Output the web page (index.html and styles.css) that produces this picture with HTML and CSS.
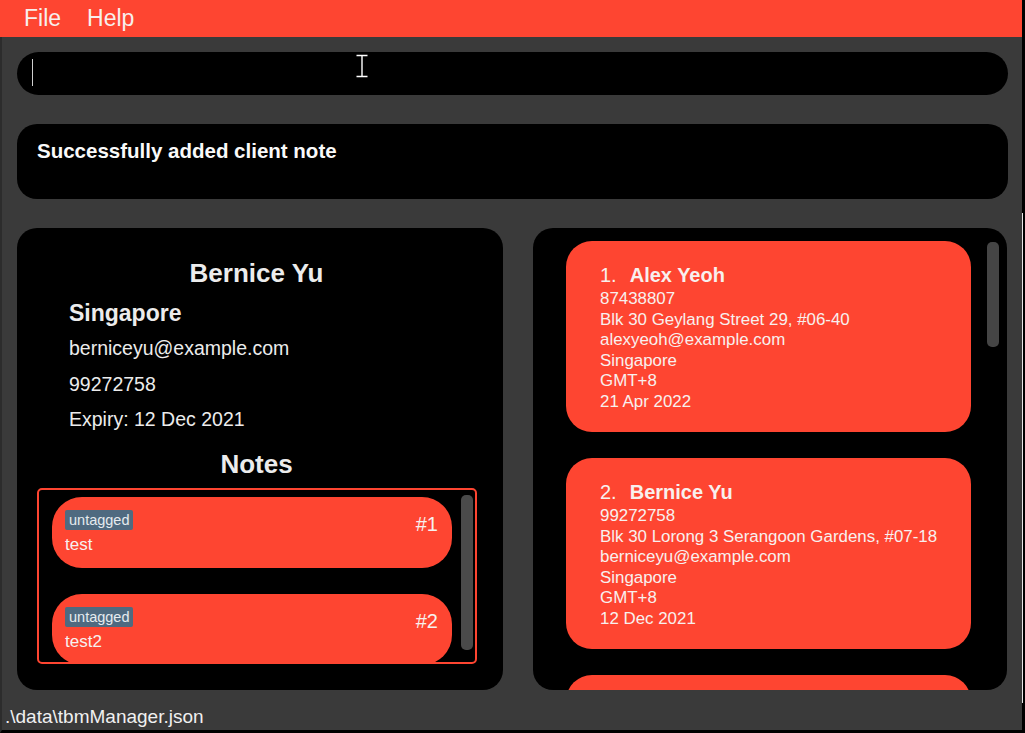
FILE: index.html
```html
<!DOCTYPE html>
<html lang="en">
<head>
<meta charset="utf-8">
<title>tbmManager</title>
<link rel="stylesheet" href="styles.css">
</head>
<body>
<div class="window">
  <div class="app">
    <div class="menubar">
      <span class="menu-item">File</span>
      <span class="menu-item">Help</span>
    </div>
    <div class="main">
      <div class="command-box"><span class="caret"></span></div>
      <div class="result-box">Successfully added client note</div>
      <div class="panels">
        <section class="panel detail">
          <div class="detail-name">Bernice Yu</div>
          <div class="detail-country">Singapore</div>
          <div class="detail-line detail-email">berniceyu@example.com</div>
          <div class="detail-line">99272758</div>
          <div class="detail-line">Expiry: 12 Dec 2021</div>
          <div class="notes-title">Notes</div>
          <div class="notes-box">
            <div class="notes-list">
              <div class="note-card">
                <div class="note-head">
                  <span class="tag">untagged</span>
                  <span class="note-num">#1</span>
                </div>
                <div class="note-text">test</div>
              </div>
              <div class="note-card">
                <div class="note-head">
                  <span class="tag">untagged</span>
                  <span class="note-num">#2</span>
                </div>
                <div class="note-text">test2</div>
              </div>
            </div>
            <div class="scroll-thumb notes-thumb"></div>
          </div>
        </section>
        <section class="panel list">
          <div class="client-list">
            <div class="client-card">
              <div class="client-title"><span class="client-idx">1.</span><span class="client-name">Alex Yeoh</span></div>
              <div class="client-body">
                <div>87438807</div>
                <div>Blk 30 Geylang Street 29, #06-40</div>
                <div>alexyeoh@example.com</div>
                <div>Singapore</div>
                <div>GMT+8</div>
                <div>21 Apr 2022</div>
              </div>
            </div>
            <div class="client-card">
              <div class="client-title"><span class="client-idx">2.</span><span class="client-name">Bernice Yu</span></div>
              <div class="client-body">
                <div>99272758</div>
                <div>Blk 30 Lorong 3 Serangoon Gardens, #07-18</div>
                <div>berniceyu@example.com</div>
                <div>Singapore</div>
                <div>GMT+8</div>
                <div>12 Dec 2021</div>
              </div>
            </div>
            <div class="client-card"></div>
          </div>
          <div class="scroll-thumb list-thumb"></div>
        </section>
      </div>
    </div>
    <div class="status">.\data\tbmManager.json</div>
  </div>
  <div class="edge"><div class="edge-line"></div></div>
</div>
<svg class="mouse-cursor" width="15" height="25" viewBox="0 0 15 25" aria-hidden="true">
  <path d="M1.5 1.5 H12.5 M7 1.5 V22.5 M1.5 22.5 H12.5" stroke="#000" stroke-width="3.2" fill="none"/>
  <path d="M1.5 1.5 H12.5 M7 1.5 V22.5 M1.5 22.5 H12.5" stroke="#fff" stroke-width="1.4" fill="none"/>
</svg>
</body>
</html>
```

FILE: styles.css
```css
* { box-sizing: border-box; }

html, body {
  margin: 0;
  padding: 0;
}

body {
  width: 1025px;
  height: 733px;
  overflow: hidden;
  background: #3a3a3a;
  font-family: "Liberation Sans", Arial, sans-serif;
  position: relative;
}

.window {
  display: flex;
  width: 1025px;
  height: 733px;
}

.app {
  width: 1022px;
  display: flex;
  flex-direction: column;
}

.edge {
  width: 3px;
  background: #000;
  position: relative;
}

.edge-line {
  margin-top: 213px;
  height: 490px;
  width: 1px;
  background: #e8e8e8;
}

.menubar {
  height: 37px;
  background: #fe4531;
  padding-left: 11px;
  display: flex;
}

.menu-item {
  padding: 0 13px;
  line-height: 37px;
  font-size: 23px;
  color: #f7efed;
}

.main {
  border-left: 2px solid #2c2c2c;
  padding: 15px 14px 0 15px;
  display: flex;
  flex-direction: column;
}

.command-box {
  height: 43px;
  background: #000;
  border-radius: 22px;
  padding: 7px 15px 0;
  margin-bottom: 29px;
}

.caret {
  display: block;
  width: 1px;
  height: 27px;
  background: #cfcfcf;
}

.result-box {
  height: 75px;
  background: #000;
  border-radius: 20px;
  padding: 15px 20px 0;
  font-size: 20.5px;
  line-height: 24px;
  font-weight: bold;
  color: #fafafa;
  margin-bottom: 29px;
}

.panels {
  display: grid;
  grid-template-columns: 486px 474px;
  column-gap: 30px;
  height: 462px;
}

.panel {
  background: #000;
  border-radius: 20px;
  height: 462px;
  overflow: hidden;
}

/* ----- detail panel ----- */
.detail {
  padding-top: 27px;
  color: #ececec;
}

.detail-name {
  font-size: 26px;
  font-weight: bold;
  line-height: 36px;
  text-align: center;
  padding-right: 7px;
}

.detail-country {
  margin-top: 4px;
  padding-left: 52px;
  font-size: 23px;
  font-weight: bold;
  line-height: 36px;
}

.detail-line {
  padding-left: 52px;
  font-size: 19.5px;
  line-height: 35.6px;
}

.notes-title {
  margin-top: 8px;
  font-size: 26px;
  font-weight: bold;
  line-height: 36px;
  text-align: center;
  padding-right: 7px;
}

.notes-box {
  margin: 6px 26px 0 20px;
  height: 176px;
  border: 2px solid #fe4531;
  border-radius: 5px;
  padding: 0 2px 0 13px;
  display: flex;
  align-items: flex-start;
  gap: 9px;
  overflow: hidden;
}

.notes-list {
  width: 400px;
  padding-top: 7px;
  display: flex;
  flex-direction: column;
  gap: 26px;
}

.note-card {
  height: 71px;
  flex-shrink: 0;
  background: #fe4531;
  border-radius: 30px;
  padding: 13px 14px 0 13px;
  color: #f7f1ef;
}

.note-head {
  height: 20px;
  display: flex;
  justify-content: space-between;
  align-items: flex-start;
}

.tag {
  height: 20px;
  line-height: 20px;
  padding: 0 4px;
  font-size: 14.5px;
  background: #4f6a80;
  color: #e6ebef;
  border-radius: 2px;
}

.note-num {
  font-size: 20px;
  line-height: 20px;
  margin-top: 4px;
}

.note-text {
  margin-top: 4px;
  font-size: 17px;
  line-height: 22px;
}

.scroll-thumb {
  width: 12px;
  flex-shrink: 0;
  background: #4a4a4a;
  border-radius: 5px;
}

.notes-thumb {
  margin-top: 5px;
  height: 155px;
}

/* ----- client list panel ----- */
.list {
  padding: 13px 0 0 33px;
  display: flex;
  align-items: flex-start;
  gap: 16px;
}

.client-list {
  width: 405px;
  display: flex;
  flex-direction: column;
  gap: 26px;
}

.client-card {
  height: 191px;
  flex-shrink: 0;
  background: #fe4531;
  border-radius: 26px;
  padding: 22px 20px 0 34px;
  color: #f8f0ee;
}

.client-title {
  font-size: 20px;
  line-height: 24px;
}

.client-name {
  font-weight: bold;
  margin-left: 13px;
}

.client-body {
  margin-top: 2px;
  font-size: 16.9px;
  line-height: 20.6px;
}

.list-thumb {
  margin-top: 1px;
  height: 105px;
  background: #454545;
}

/* ----- status bar ----- */
.status {
  height: 43px;
  border-left: 2px solid #2c2c2c;
  border-bottom: 3px solid #000;
  padding: 16px 0 0 3px;
  font-size: 19px;
  line-height: 22px;
  color: #f0f0f0;
}

.mouse-cursor {
  position: absolute;
  left: 355px;
  top: 54px;
}
```
